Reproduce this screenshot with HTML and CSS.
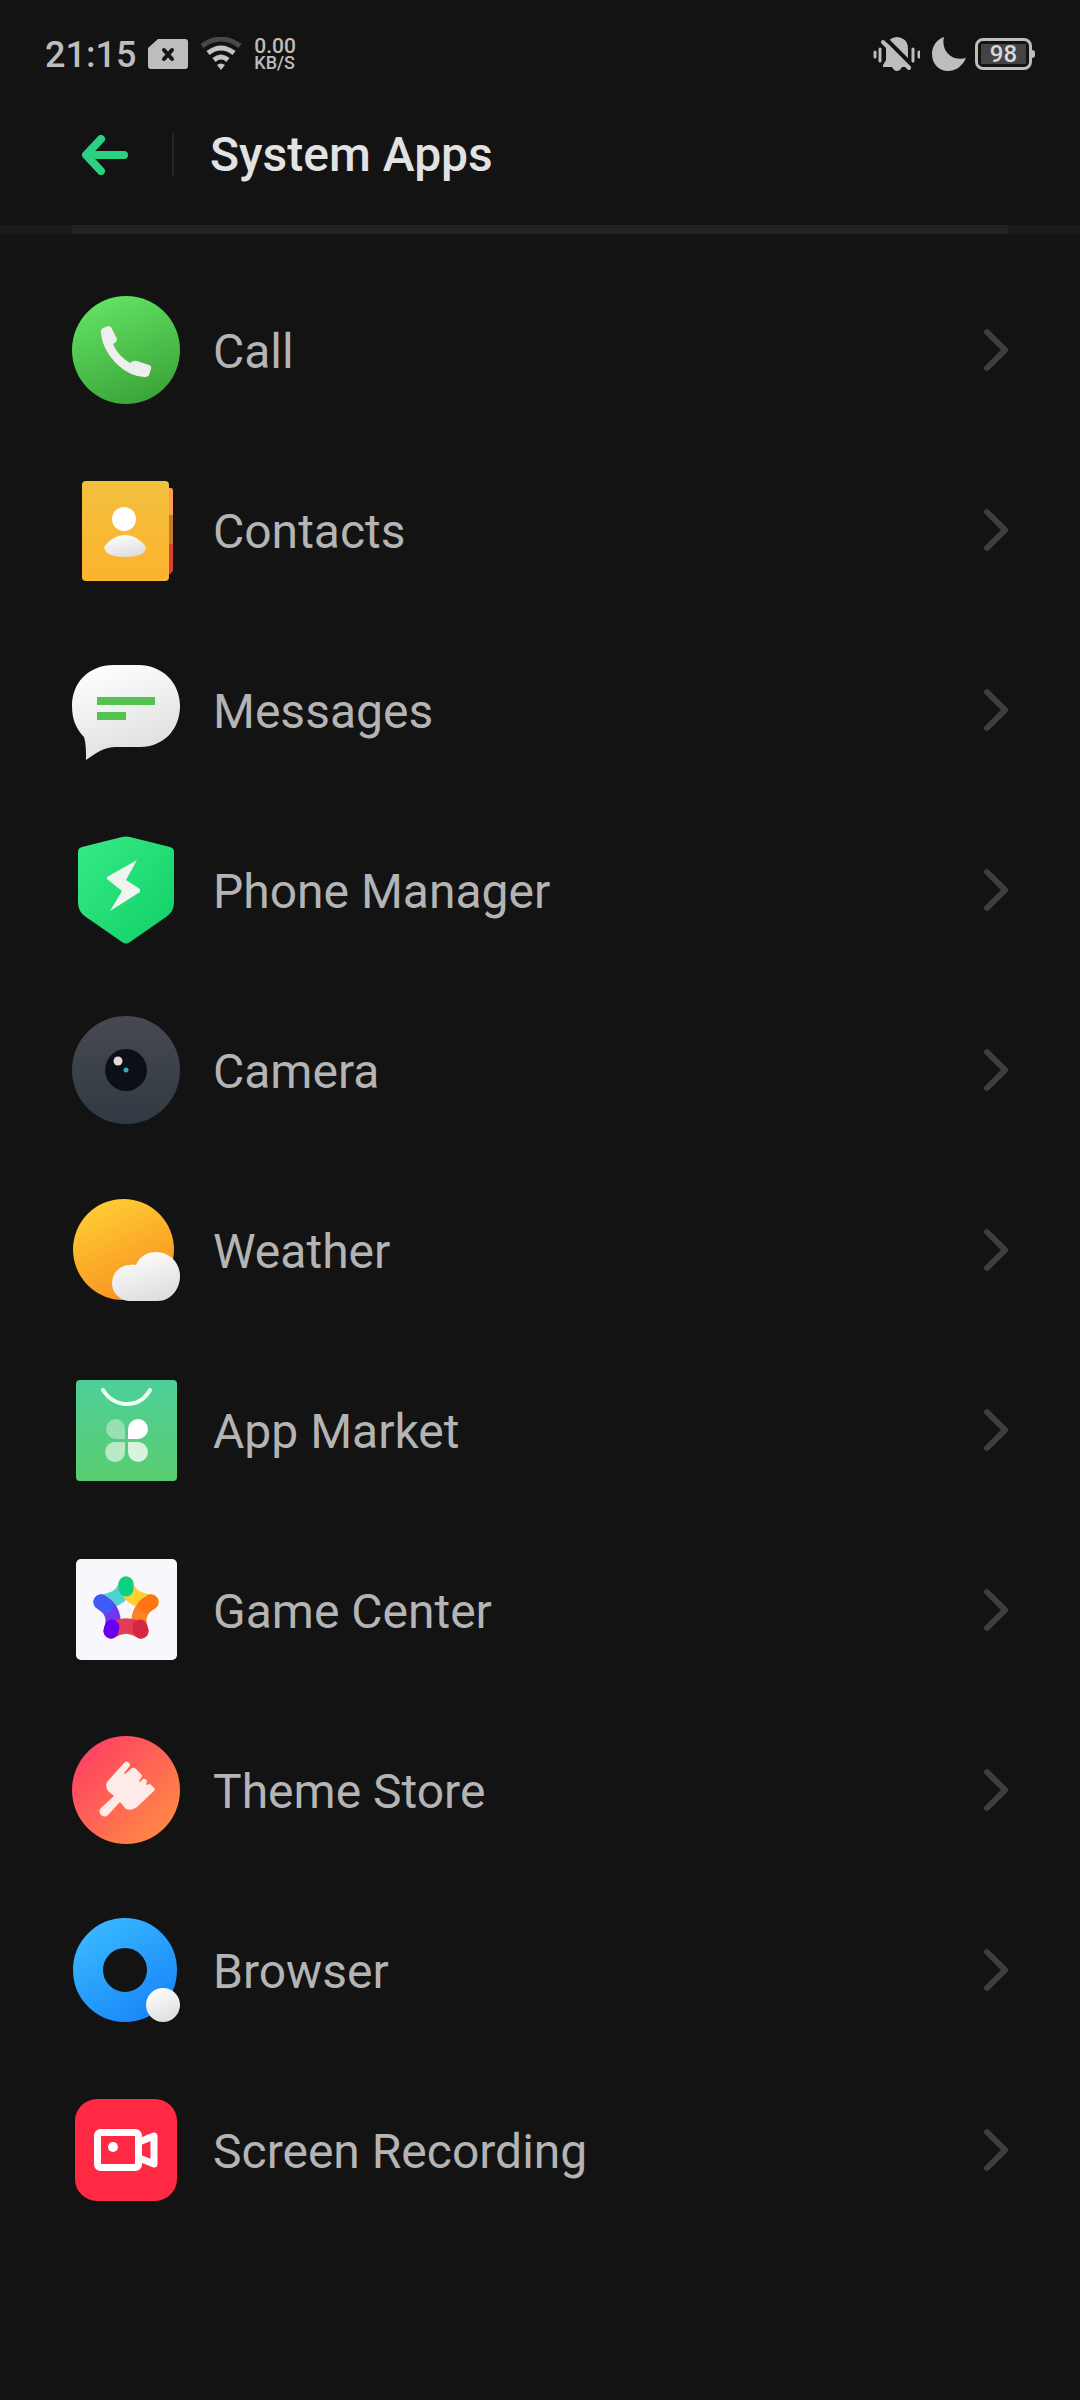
FILE: index.html
```html
<!DOCTYPE html>
<html lang="en">
<head>
<meta charset="utf-8">
<meta name="viewport" content="width=device-width, initial-scale=1">
<title>System Apps</title>
<link rel="stylesheet" href="styles.css">
</head>
<body>
<svg class="defs" width="0" height="0" aria-hidden="true">
  <defs>
    <linearGradient id="g-call" x1="0.3" y1="0" x2="0.7" y2="1"><stop offset="0" stop-color="#62e362"/><stop offset="1" stop-color="#3aa238"/></linearGradient>
    <linearGradient id="g-contacts" x1="0" y1="0" x2="0" y2="1"><stop offset="0" stop-color="#f1c03e"/><stop offset="1" stop-color="#fdb32e"/></linearGradient>
    <linearGradient id="g-white" x1="0.2" y1="0" x2="0.6" y2="1"><stop offset="0" stop-color="#ffffff"/><stop offset="1" stop-color="#dedede"/></linearGradient>
    <linearGradient id="g-shield" x1="0" y1="0" x2="1" y2="1"><stop offset="0" stop-color="#37ea87"/><stop offset="1" stop-color="#10d066"/></linearGradient>
    <linearGradient id="g-camera" x1="0" y1="0" x2="0" y2="1"><stop offset="0" stop-color="#474952"/><stop offset="1" stop-color="#303a42"/></linearGradient>
    <linearGradient id="g-sun" x1="0.25" y1="0" x2="0.7" y2="1"><stop offset="0" stop-color="#ffce34"/><stop offset="1" stop-color="#f88e20"/></linearGradient>
    <linearGradient id="g-market" x1="0" y1="0" x2="0" y2="1"><stop offset="0" stop-color="#4dd098"/><stop offset="1" stop-color="#5acc70"/></linearGradient>
    <linearGradient id="g-theme" x1="0.1" y1="0.1" x2="0.9" y2="0.9"><stop offset="0" stop-color="#ff4064"/><stop offset="1" stop-color="#ff8a45"/></linearGradient>
    <linearGradient id="g-browser" x1="0.1" y1="0" x2="0.8" y2="1"><stop offset="0" stop-color="#36b4ff"/><stop offset="1" stop-color="#1b8bf9"/></linearGradient>
    <symbol id="chevron" viewBox="0 0 24 44"><path d="M3 4 L21 22 L3 40" fill="none" stroke="#3e3e3e" stroke-width="6" stroke-linecap="round" stroke-linejoin="miter"/></symbol>
  </defs>
</svg>

<div class="status">
  <div class="status-group">
    <span class="clock">21:15</span>
    <svg class="sim" viewBox="0 0 40 30" aria-label="No SIM"><path d="M10 0H37Q40 0 40 3V27Q40 30 37 30H3Q0 30 0 27V9Z" fill="#bdbdbd"/><path d="M16 11L24 20M24 11L16 20" stroke="#151515" stroke-width="4" stroke-linecap="round"/></svg>
    <svg class="wifi" viewBox="0 0 42 34" aria-label="Wi-Fi"><g fill="none" stroke-width="5"><path d="M2 9Q21-5 40 9" stroke="#484848"/><path d="M8 16Q21 6 34 16M14 23Q21 17 28 23" stroke="#c4c4c4"/></g><path d="M17 28Q21 25 25 28L21 33Z" fill="#c4c4c4"/></svg>
    <div class="speed"><span class="rate">0.00</span><span class="unit">KB/S</span></div>
  </div>
  <div class="status-group right">
    <svg class="bell" viewBox="0 0 47 36" aria-label="Silent"><path d="M13 12Q15 1 24 1Q35 2 35 13V22L38 30V31H29Q27 35 24 35Q21 35 19 31H10V29L13 24Z" fill="#bdbdbd"/><path d="M13 3L40 30" stroke="#131313" stroke-width="4"/><path d="M10 6L36 32" stroke="#bdbdbd" stroke-width="4" stroke-linecap="round"/><path d="M2 16V21M7 13V25M40 13V25M46 16V21" stroke="#bdbdbd" stroke-width="3" stroke-linecap="round"/></svg>
    <svg class="moon" viewBox="0 0 34 34" aria-label="Do not disturb"><path d="M12 0C9 12 18 25 34 21C30 30 23 34 16 34C7 34 0 27 0 17C0 9 5 2 12 0Z" fill="#bdbdbd"/></svg>
    <div class="battery"><span class="level">98</span></div>
  </div>
</div>

<header class="header">
  <button class="back" type="button" aria-label="Back"><svg viewBox="0 0 48 40"><path d="M44 20H10M21 4L6 20L21 36" fill="none" stroke="#2bd081" stroke-width="8" stroke-linecap="round" stroke-linejoin="round"/></svg></button>
  <h1>System Apps</h1>
</header>
<div class="rule"><div class="rule-inner"></div></div>

<ul class="apps">
  <li><a href="#call">
    <svg class="icon" viewBox="0 0 108 108"><circle cx="54" cy="54" r="54" fill="url(#g-call)"/><path d="M29 37Q28 34 31 32L36 30Q39 30 40 33L45 43Q45 46 41 48Q46 60 58 67Q61 64 65 65L77 69Q80 70 79 73L77 79Q76 81 72 81Q58 80 47 70C36 60 30 49 29 37Z" fill="#eee"/></svg>
    <span class="name">Call</span><svg class="chevron"><use href="#chevron"/></svg></a></li>
  <li><a href="#contacts">
    <svg class="icon" viewBox="0 0 108 108"><path d="M94 12H99Q101 12 101 15V39H94Z" fill="#ff9d52"/><path d="M94 39H101V68H94Z" fill="#c57d2c"/><path d="M94 68H101V95L98 98H94Z" fill="#d6403b"/><rect x="10" y="5" width="87" height="100" rx="4" fill="url(#g-contacts)"/><circle cx="52" cy="43" r="12" fill="#fff"/><path d="M32 71Q41 59 53 59Q65 59 74 71Q74 81 53 81Q33 81 32 71Z" fill="url(#g-white)"/></svg>
    <span class="name">Contacts</span><svg class="chevron"><use href="#chevron"/></svg></a></li>
  <li><a href="#messages">
    <svg class="icon" viewBox="0 0 108 108"><path d="M42 9H66C91 9 108 27 108 50C108 73 92 91 68 91H44C31 91 23 98 14 104C14 95 14 87 12 81C4 73 0 63 0 50C0 27 16 9 42 9Z" fill="url(#g-white)"/><path d="M25 41H83V49H25ZM25 56H54V64H25Z" fill="#55c351"/></svg>
    <span class="name">Messages</span><svg class="chevron"><use href="#chevron"/></svg></a></li>
  <li><a href="#phone-manager">
    <svg class="icon" viewBox="0 0 108 108"><path d="M50 1Q54 0 58 1L98 11Q102 12 102 16V66Q102 76 94 81L58 106Q54 109 50 106L14 81Q6 76 6 66V16Q6 12 10 11Z" fill="url(#g-shield)"/><path d="M65 24L35 41V43L50 55L38 75L68 56V53L54 44Z" fill="#eef5ef"/></svg>
    <span class="name">Phone Manager</span><svg class="chevron"><use href="#chevron"/></svg></a></li>
  <li><a href="#camera">
    <svg class="icon" viewBox="0 0 108 108"><circle cx="54" cy="54" r="54" fill="url(#g-camera)"/><circle cx="54" cy="54" r="21" fill="#0c0f18"/><circle cx="46" cy="45" r="4.500" fill="#dedbd8"/><circle cx="54" cy="54" r="2.500" fill="#23b2be"/></svg>
    <span class="name">Camera</span><svg class="chevron"><use href="#chevron"/></svg></a></li>
  <li><a href="#weather">
    <svg class="icon" viewBox="0 0 108 108"><circle cx="51.500" cy="53.500" r="50.500" fill="url(#g-sun)"/><path d="M58 105A18 18 0 0 1 58 69Q61 68 64 69C68 60 75 56 84 56C98 56 108 67 108 80C108 94 98 105 86 105Z" fill="url(#g-white)"/></svg>
    <span class="name">Weather</span><svg class="chevron"><use href="#chevron"/></svg></a></li>
  <li><a href="#app-market">
    <svg class="icon" viewBox="0 0 108 108"><rect x="4" y="4" width="101" height="101" rx="4" fill="url(#g-market)"/><path d="M31 14Q40 28 55 28Q70 28 78 14" fill="none" stroke="#ecfff4" stroke-width="4" stroke-linecap="round"/><path d="M44 43A10 10 0 0 0 44 63H53V53A10 10 0 0 0 44 43Z" fill="#96e0b4"/><path d="M66 43A10 10 0 0 0 56 53V63H66A10 10 0 0 0 66 43Z" fill="#fff"/><path d="M44 66A10 10 0 1 0 53 76V66Z" fill="#b9eac6"/><path d="M56 66V76A10 10 0 1 0 66 66Z" fill="#d8f4df"/></svg>
    <span class="name">App Market</span><svg class="chevron"><use href="#chevron"/></svg></a></li>
  <li><a href="#game-center">
    <svg class="icon" viewBox="0 0 108 108"><rect x="4" y="3" width="101" height="101" rx="5" fill="#f7f7fc"/><g fill="none" stroke-width="15" stroke-linecap="round"><path d="M54 28Q51 44 29 46" stroke="#50d2d0"/><path d="M54 28Q57 44 79 46" stroke="#ffd02e"/><path d="M79 46Q62 56 69 75" stroke="#ff8125"/><path d="M29 46Q46 56 39 75" stroke="#7137ee"/><path d="M39 75Q54 65 69 75" stroke="#e63b54"/></g><g fill="none" stroke-width="15" stroke-linecap="round"><path d="M54 28V33" stroke="#0bd183"/><path d="M79 46L73 50" stroke="#ff7416"/><path d="M69 75L68 71" stroke="#d52643"/><path d="M39 75L40 71" stroke="#6700f0"/><path d="M29 46L34 50" stroke="#405bf4"/></g></svg>
    <span class="name">Game Center</span><svg class="chevron"><use href="#chevron"/></svg></a></li>
  <li><a href="#theme-store">
    <svg class="icon" viewBox="0 0 108 108"><circle cx="54" cy="54" r="54" fill="url(#g-theme)"/><path d="M29 72L42 60L36 55Q33 51 35 46L52 27Q55 24 57 27Q59 29 57 31L52 37L53 38L60 32Q62 31 64 33L69 38Q71 40 69 42L67 45L68 46L71 43Q73 42 75 45L74 49L78 48Q81 50 83 54L65 71Q60 75 54 73L48 66L36 79Q33 82 29 79Q26 75 29 72Z" fill="#fdebea"/></svg>
    <span class="name">Theme Store</span><svg class="chevron"><use href="#chevron"/></svg></a></li>
  <li><a href="#browser">
    <svg class="icon" viewBox="0 0 108 108"><circle cx="53" cy="54" r="37" fill="none" stroke="url(#g-browser)" stroke-width="30"/><circle cx="91" cy="89" r="17" fill="url(#g-white)"/></svg>
    <span class="name">Browser</span><svg class="chevron"><use href="#chevron"/></svg></a></li>
  <li><a href="#screen-recording">
    <svg class="icon" viewBox="0 0 108 108"><rect x="3" y="3" width="102" height="102" rx="22" fill="#ff2943"/><g fill="none" stroke="#fff" stroke-width="7" stroke-linejoin="round"><rect x="25.500" y="36.500" width="41" height="35" rx="3"/><path d="M67 46L82 40V68L67 62"/></g><circle cx="41" cy="51" r="5" fill="#fff"/></svg>
    <span class="name">Screen Recording</span><svg class="chevron"><use href="#chevron"/></svg></a></li>
</ul>
</body>
</html>
```
FILE: styles.css
```css
* { box-sizing: border-box; }

body {
  margin: 0;
  min-height: 100vh;
  background: #131313;
  color: #b4b4b4;
  font-family: Roboto, "Liberation Sans", sans-serif;
}

svg { display: block; flex: none; }
.defs { position: absolute; }

.status {
  display: flex;
  justify-content: space-between;
  align-items: center;
  height: 84px;
  padding: 24px 44px 0 45px;
  color: #bdbdbd;
}
.status-group { display: flex; align-items: center; gap: 12px; }
.status-group.right { padding-right: 4px; }
.clock { padding-top: 2px; font-size: 36px; font-weight: 500; line-height: 40px; }
.sim { width: 40px; height: 30px; }
.wifi { width: 42px; height: 34px; }
.speed { display: flex; flex-direction: column; font-weight: 500; }
.rate { font-size: 21px; line-height: 18px; }
.unit { font-size: 18px; line-height: 16px; }
.bell { width: 47px; height: 36px; }
.moon { width: 34px; height: 34px; }

.battery {
  position: relative;
  width: 57px;
  height: 32px;
  padding: 3px;
  margin-left: -3px;
  border: 3px solid #bdbdbd;
  border-radius: 8px;
}
.battery::after {
  content: "";
  position: absolute;
  top: 9px;
  right: -6px;
  width: 3px;
  height: 8px;
  border-radius: 0 3px 3px 0;
  background: #bdbdbd;
}
.level {
  display: block;
  height: 20px;
  background: #444;
  color: #d8d8d8;
  font-size: 24px;
  font-weight: 500;
  line-height: 20px;
  text-align: center;
}

.header {
  display: flex;
  align-items: center;
  height: 141px;
  padding-left: 72px;
}
.back {
  display: flex;
  align-items: center;
  width: 102px;
  height: 44px;
  padding: 0 8px;
  border: 0;
  border-right: 2px solid #242424;
  background: none;
}
.back svg { width: 48px; height: 40px; }
h1 {
  margin: 0 0 0 36px;
  color: #e2e2e2;
  font-size: 48px;
  font-weight: 500;
  line-height: 56px;
}

.rule { padding: 0 72px; background: #1a1a1a; }
.rule-inner { height: 9px; background: #232323; }

.apps { margin: 0; padding: 26px 0 0; list-style: none; }
.apps a {
  display: flex;
  align-items: center;
  height: 180px;
  padding: 0 72px;
  color: inherit;
  text-decoration: none;
}
.icon { width: 108px; height: 108px; }
.name {
  flex: 1;
  padding: 4px 0 0 33px;
  font-size: 48px;
  line-height: 56px;
}
.chevron { width: 24px; height: 44px; }
```
